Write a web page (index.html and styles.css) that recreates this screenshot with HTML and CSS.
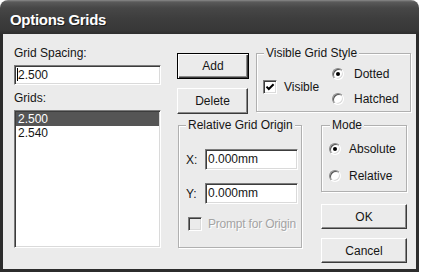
FILE: index.html
```html
<!DOCTYPE html>
<html lang="en">
<head>
    <meta charset="UTF-8">
    <title>Options Grids</title>
    <link rel="stylesheet" href="styles.css">
</head>
<body>
    <div class="window">
        <div class="titlebar">Options Grids</div>
        <div class="client">
            <!-- spacing + list of grids -->
            <div class="col-left">
                <div class="label">Grid Spacing:</div>
                <div class="field spacing"><span class="caret"></span>2.500</div>
                <div class="label grids-label">Grids:</div>
                <div class="listbox">
                    <div class="item selected">2.500</div>
                    <div class="item">2.540</div>
                </div>
            </div>

            <div class="col-right">
                <div class="row-top">
                    <div class="btn-stack">
                        <button class="btn default add">Add</button>
                        <button class="btn delete">Delete</button>
                    </div>
                    <fieldset class="group visible-group">
                        <legend>Visible Grid Style</legend>
                        <div class="visible-body">
                            <div class="check-row visible-check">
                                <span class="checkbox">
                                    <svg width="10" height="10" viewBox="0 0 10 10"><polyline points="1.5,4.6 3.8,7 8.6,2.2" fill="none" stroke="#000" stroke-width="2"/></svg>
                                </span>
                                Visible
                            </div>
                            <div class="radio-col">
                                <div class="radio-row"><span class="radio on"></span>Dotted</div>
                                <div class="radio-row"><span class="radio"></span>Hatched</div>
                            </div>
                        </div>
                    </fieldset>
                </div>

                <div class="row-bottom">
                    <fieldset class="group origin-group">
                        <legend>Relative Grid Origin</legend>
                        <div class="origin-body">
                            <div class="coord-row">
                                <span class="coord-label">X:</span>
                                <div class="field coord">0.000mm</div>
                            </div>
                            <div class="coord-row">
                                <span class="coord-label">Y:</span>
                                <div class="field coord">0.000mm</div>
                            </div>
                            <div class="check-row prompt">
                                <span class="checkbox disabled"></span>
                                <span class="disabled-text">Prompt for Origin</span>
                            </div>
                        </div>
                    </fieldset>

                    <div class="mode-col">
                        <fieldset class="group mode-group">
                            <legend>Mode</legend>
                            <div class="mode-body">
                                <div class="radio-row"><span class="radio on"></span>Absolute</div>
                                <div class="radio-row"><span class="radio"></span>Relative</div>
                            </div>
                        </fieldset>
                        <button class="btn wide ok">OK</button>
                        <button class="btn wide cancel">Cancel</button>
                    </div>
                </div>
            </div>
        </div>
    </div>
</body>
</html>
```

FILE: styles.css
```css
* {
    box-sizing: border-box;
}
body {
    margin: 0;
    background: #fff;
    font-family: "Liberation Sans", Arial, sans-serif;
    font-size: 12px;
    line-height: 14px;
    color: #151515;
}
.window {
    width: 419px;
    height: 272px;
    border-radius: 8px 8px 0 0;
    overflow: hidden;
    display: flex;
    flex-direction: column;
}
.titlebar {
    height: 34px;
    flex: none;
    padding: 11px 0 0 10px;
    background: linear-gradient(#8a8a8a 0, #5a5a5a 2px, #474747 8px, #3e3e3e 18px, #383838 30px, #2e2e2e 34px);
    color: #fff;
    font-weight: bold;
    font-size: 15px;
    line-height: 18px;
    letter-spacing: -0.3px;
    text-shadow: 1px 1px 0 #1e1e1e;
}
.client {
    flex: 1;
    display: flex;
    background: #ebebeb;
    border: 3px solid #2c2c2c;
    border-top: 0;
    padding: 12px 0 0 11px;
}

/* sunken controls */
.field,
.listbox,
.checkbox {
    background: #fff;
    border: 1px solid;
    border-color: #7c7c7c #fff #fff #7c7c7c;
    box-shadow: inset 1px 1px 0 #3c3c3c, inset -1px -1px 0 #dadada;
}
.field {
    height: 20px;
    padding: 0 0 0 2px;
    line-height: 18px;
    white-space: nowrap;
}
.caret {
    display: inline-block;
    width: 1px;
    height: 13px;
    background: #000;
    vertical-align: -2px;
}

.col-left {
    width: 147px;
    flex: none;
}
.spacing {
    margin-top: 5px;
}
.grids-label {
    margin-top: 6px;
}
.listbox {
    margin-top: 5px;
    height: 138px;
    padding: 1px;
}
.item {
    padding-left: 2px;
    height: 14px;
}
.item.selected {
    background: #555;
    color: #fff;
}

.col-right {
    margin-left: 16px;
    width: 234px;
    flex: none;
}
.row-top,
.row-bottom {
    display: flex;
    align-items: flex-start;
}
.row-top {
    height: 68px;
}
.row-bottom {
    margin-top: 4px;
}

/* raised buttons */
.btn {
    display: block;
    font: inherit;
    color: #151515;
    padding: 0;
    background: #ebebeb;
    border: 1px solid;
    border-color: #fff #3a3a3a #3a3a3a #fff;
    box-shadow: inset -1px -1px 0 #8a8a8a;
}
.btn.default {
    border-color: #000;
    box-shadow: inset 1px 1px 0 #fff, inset -1px -1px 0 #3a3a3a, inset -2px -2px 0 #8a8a8a;
}
.btn-stack {
    width: 72px;
    flex: none;
}
.add {
    width: 72px;
    height: 26px;
    margin-top: 7px;
}
.delete {
    width: 71px;
    height: 26px;
    margin-top: 9px;
}
.wide {
    width: 86px;
    height: 25px;
}
.ok {
    margin-top: 12px;
}
.cancel {
    margin-top: 9px;
}

/* group boxes */
.group {
    margin: 0;
    padding: 0;
    min-width: 0;
    border: 1px solid #b0b0b0;
    box-shadow: inset 1px 1px 0 #fff, 1px 1px 0 #fff;
}
.group legend {
    margin-left: 7px;
    padding: 0 2px;
    line-height: 14px;
    background: #ebebeb;
}
.visible-group {
    margin-left: 7px;
    width: 155px;
}
.visible-body {
    display: flex;
    align-items: center;
    padding: 7px 0 5px 6px;
}
.check-row {
    display: flex;
    align-items: center;
    white-space: nowrap;
}
.checkbox {
    width: 14px;
    height: 14px;
    display: flex;
    align-items: center;
    justify-content: center;
    flex: none;
}
.checkbox.disabled {
    background: #ebebeb;
}
.visible-check {
    width: 69px;
    gap: 7px;
}
.radio-col {
    display: flex;
    flex-direction: column;
    gap: 11px;
}
.radio-row {
    display: flex;
    align-items: center;
    gap: 10px;
    height: 14px;
}
.radio {
    width: 12px;
    height: 12px;
    flex: none;
    border-radius: 50%;
    background: #fff;
    border: 1px solid;
    border-color: #8a8a8a #fff #fff #8a8a8a;
    box-shadow: inset 1px 1px 0 #555, inset -1px -1px 0 #dadada;
    display: flex;
    align-items: center;
    justify-content: center;
}
.radio.on::after {
    content: "";
    width: 4px;
    height: 4px;
    border-radius: 50%;
    background: #000;
}

.origin-group {
    margin-left: 1px;
    width: 124px;
    flex: none;
}
.origin-body {
    padding: 17px 3px 16px 7px;
}
.coord-row {
    display: flex;
    align-items: center;
}
.coord-row + .coord-row {
    margin-top: 13px;
}
.coord-label {
    width: 19px;
}
.field.coord {
    width: 93px;
    height: 21px;
    line-height: 19px;
}
.prompt {
    margin-top: 13px;
    margin-left: 2px;
    gap: 6px;
    height: 14px;
}
.disabled-text {
    color: #a4a4a4;
    text-shadow: 1px 1px 0 #fff;
    letter-spacing: -0.2px;
}

.mode-col {
    margin-left: 19px;
    width: 86px;
    flex: none;
}
.mode-group legend {
    margin-left: 8px;
}
.mode-body {
    padding: 10px 0 9px 7px;
    display: flex;
    flex-direction: column;
    gap: 14px;
}
.mode-body .radio-row {
    gap: 8px;
    height: 13px;
}
```
